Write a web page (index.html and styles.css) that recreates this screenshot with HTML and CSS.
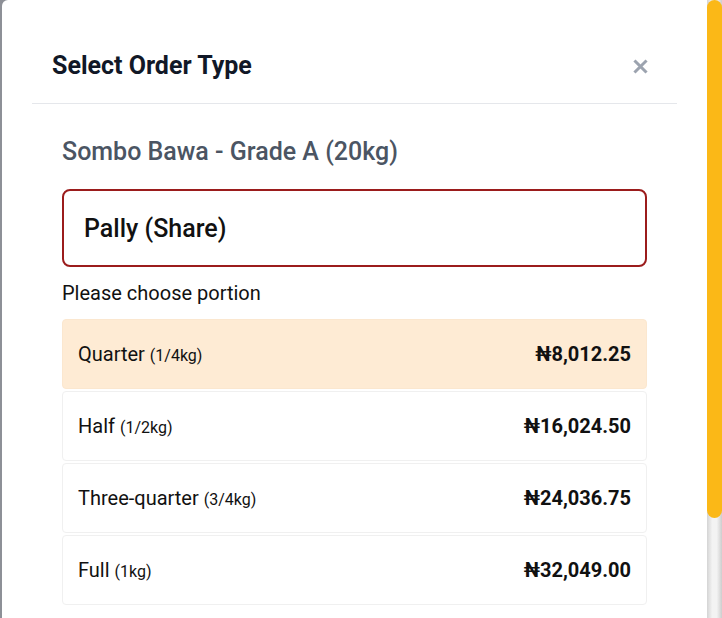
FILE: index.html
```html
<!DOCTYPE html>
<html lang="en">
<head>
<meta charset="utf-8">
<title>Select Order Type</title>
<link rel="stylesheet" href="styles.css">
</head>
<body>
<div class="modal">
  <div class="dialog">
    <div class="header">
      <h2 class="title">Select Order Type</h2>
      <button class="close" aria-label="Close">
        <svg width="15" height="15" viewBox="0 0 15 15"><path d="M2.5 2.5 L12.5 12.5 M12.5 2.5 L2.5 12.5" stroke="#9ca3af" stroke-width="3" stroke-linecap="square"/></svg>
      </button>
    </div>
    <div class="body">
      <div class="product">Sombo Bawa - Grade A (20kg)</div>
      <div class="type-box">Pally (Share)</div>
      <div class="prompt">Please choose portion</div>
      <div class="options">
        <div class="option selected"><span class="name">Quarter <small>(1/4kg)</small></span><span class="price">₦8,012.25</span></div>
        <div class="option"><span class="name">Half <small>(1/2kg)</small></span><span class="price">₦16,024.50</span></div>
        <div class="option"><span class="name">Three-quarter <small>(3/4kg)</small></span><span class="price">₦24,036.75</span></div>
        <div class="option"><span class="name">Full <small>(1kg)</small></span><span class="price">₦32,049.00</span></div>
      </div>
    </div>
  </div>
  <div class="scrollbar"><div class="thumb"></div></div>
</div>
</body>
</html>
```

FILE: styles.css
```css
html, body {
  margin: 0;
  padding: 0;
  height: 618px;
  overflow: hidden;
}
body {
  background: #8d9097;
  font-family: Roboto, "Liberation Sans", Arial, sans-serif;
  color: #111;
}
.modal {
  margin-left: 2px;
  height: 618px;
  background: #fff;
  border-top-left-radius: 6px;
  display: flex;
  overflow: hidden;
}
.dialog {
  flex: 1;
  padding: 30px 30px 0 30px;
  min-width: 0;
}
.scrollbar {
  width: 15px;
  flex: none;
  background: linear-gradient(to right, #d4d4d4, #f3f3f3 35%, #f3f3f3 65%, #cdcdcd);
}
.thumb {
  height: 518px;
  background: #fbb817;
  border-radius: 8px;
}
.header {
  display: flex;
  align-items: center;
  justify-content: space-between;
  padding: 21px 29px 22px 20px;
  border-bottom: 1px solid #e5e7eb;
}
.title {
  margin: 0;
  font-size: 25px;
  line-height: 30px;
  font-weight: 700;
  color: #111827;
}
.close {
  border: 0;
  background: none;
  padding: 0;
  width: 15px;
  height: 15px;
  display: flex;
  cursor: pointer;
}
.body {
  padding: 33px 30px 30px 30px;
}
.product {
  font-size: 25px;
  line-height: 30px;
  font-weight: 500;
  color: #4b5563;
}
.type-box {
  margin-top: 22px;
  height: 74px;
  border: 2px solid #9b1c1c;
  border-radius: 8px;
  display: flex;
  align-items: center;
  padding: 0 20px;
  font-size: 25px;
  font-weight: 500;
  color: #111;
}
.prompt {
  margin-top: 14px;
  font-size: 20px;
  line-height: 24px;
  color: #111;
}
.options {
  margin-top: 14px;
  display: flex;
  flex-direction: column;
  gap: 2px;
}
.option {
  height: 70px;
  box-sizing: border-box;
  border: 1px solid #f0f0f0;
  border-radius: 4px;
  display: flex;
  align-items: center;
  justify-content: space-between;
  padding: 0 15px;
  background: #fff;
}
.option.selected {
  background: #feebd4;
  border-color: #fbe7cf;
}
.name {
  font-size: 20px;
  color: #111;
}
.name small {
  font-size: 16px;
}
.price {
  font-size: 20px;
  font-weight: 700;
  color: #111;
}
```
